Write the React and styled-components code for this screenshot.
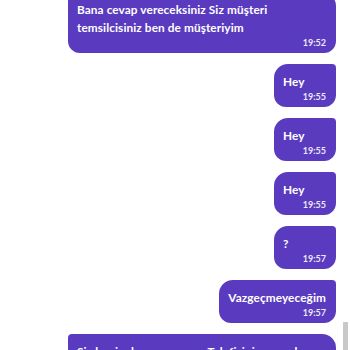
import styled, { createGlobalStyle } from 'styled-components';

const GlobalStyle = createGlobalStyle`
  html, body {
    margin: 0;
    padding: 0;
    background: #ffffff;
    overflow: hidden;
  }
  body {
    font-family: Lato, "Open Sans", sans-serif;
  }
`;

const Screen = styled.div`
  position: relative;
  width: 350px;
  height: 350px;
  overflow: hidden;
  background: #ffffff;
`;

const List = styled.div`
  display: flex;
  flex-direction: column;
  gap: 11px;
  margin: -8px 14px 0 68px;
`;

const Row = styled.div`
  display: flex;
  justify-content: ${p => (p.mine ? 'flex-end' : 'flex-start')};
`;

const Bubble = styled.div`
  box-sizing: border-box;
  min-width: 62px;
  max-width: 268px;
  width: ${p => (p.mine ? 'auto' : '268px')};
  padding: 9px 10px 4px 9px;
  background: #5a3bbf;
  color: #ffffff;
  border-radius: ${p => (p.mine ? '14px 4px 12px 12px' : '4px 14px 12px 12px')};
`;

const Text = styled.div`
  font-size: 11.8px;
  font-weight: 700;
  line-height: 18px;
  letter-spacing: 0.1px;
`;

const Time = styled.div`
  font-size: 9px;
  font-weight: 700;
  line-height: 12px;
  text-align: right;
  color: #ece8fa;
`;

const Thumb = styled.div`
  position: absolute;
  right: 2px;
  top: 322px;
  width: 5px;
  height: 40px;
  background: #c9c9c9;
`;

const messages = [
  { mine: false, text: 'Bana cevap vereceksiniz Siz müşteri temsilcisiniz ben de müşteriyim', time: '19:52' },
  { mine: true, text: 'Hey', time: '19:55' },
  { mine: true, text: 'Hey', time: '19:55' },
  { mine: true, text: 'Hey', time: '19:55' },
  { mine: true, text: '?', time: '19:57' },
  { mine: true, text: 'Vazgeçmeyeceğim', time: '19:57' },
  { mine: false, text: 'Siz benim bu zamanımın Telefisini yapacaksınız', time: '19:58' },
];

const App = () => (
  <Screen>
    <GlobalStyle />
    <List>
      {messages.map((m, i) => (
        <Row key={i} mine={m.mine}>
          <Bubble mine={m.mine}>
            <Text>{m.text}</Text>
            <Time>{m.time}</Time>
          </Bubble>
        </Row>
      ))}
    </List>
    <Thumb />
  </Screen>
);

export default App;
